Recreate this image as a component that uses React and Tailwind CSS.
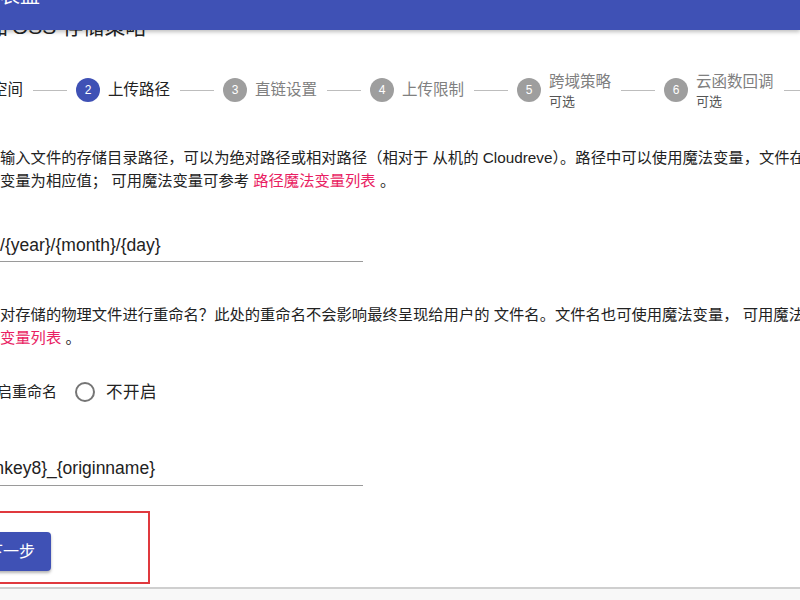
import React from 'react';

const font = { fontFamily: '"Liberation Sans", "Noto Sans CJK SC", sans-serif' };

const steps = [
  { n: 1, label: '存储空间', state: 'done' },
  { n: 2, label: '上传路径', state: 'active' },
  { n: 3, label: '直链设置' },
  { n: 4, label: '上传限制' },
  { n: 5, label: '跨域策略', optional: true },
  { n: 6, label: '云函数回调', optional: true },
  { n: 7, label: '完成' },
];

function Step({ step }) {
  const on = step.state === 'active' || step.state === 'done';
  return (
    <div className="w-[147px] shrink-0 flex items-center">
      <div
        className={`w-[24px] h-[24px] shrink-0 rounded-full flex items-center justify-center text-white text-[12px] ${
          on ? 'bg-[#3f51b5]' : 'bg-[#9e9e9e]'
        }`}
      >
        {step.n}
      </div>
      <div className="ml-[8px] shrink-0 flex flex-col">
        <span
          className={`text-[15.5px] leading-[22px] ${
            on ? 'text-[#222]' : 'text-[#808080]'
          }`}
        >
          {step.label}
        </span>
        {step.optional && (
          <span className="text-[13px] leading-[17px] text-[#555]">可选</span>
        )}
      </div>
      <div className="flex-1 ml-[10px] mr-[9px] border-t border-[#bdbdbd]" />
    </div>
  );
}

// text that runs off the left edge: right-aligned against a fixed end point
function CutLeft({ end, children, className = '' }) {
  return (
    <div className={`shrink-0 flex justify-end whitespace-nowrap ${className}`} style={{ width: end }}>
      <span>{children}</span>
    </div>
  );
}

export default function App() {
  return (
    <div className="relative w-[800px] h-[600px] overflow-hidden bg-white text-[#222]" style={font}>
      {/* app bar */}
      <div className="absolute top-0 left-0 right-0 h-[30px] z-10 bg-[#3f51b5] shadow-[0_2px_4px_rgba(0,0,0,0.25)] overflow-hidden">
        <div className="ml-[-20px] mt-[-14px] text-[20px] leading-[20px] text-white whitespace-nowrap">仪表盘</div>
      </div>

      <div className="flex flex-col">
        {/* title */}
        <div className="h-[54px] flex items-center text-[21px] whitespace-nowrap">
          <CutLeft end={8}>添加</CutLeft>
          <span className="ml-[4px]">OSS 存储策略</span>
        </div>

        {/* stepper */}
        <div className="h-[72px] flex items-center ml-[-71px]">
          {steps.map(s => (
            <Step key={s.n} step={s} />
          ))}
        </div>

        {/* path */}
        <p className="mt-[20px] w-[1100px] text-[15.3px] leading-[23px] whitespace-nowrap">
          输入文件的存储目录路径，可以为绝对路径或相对路径（相对于 从机的 Cloudreve）。路径中可以使用魔法变量，文件在上传时会自动替换这些
          <br />
          变量为相应值； 可用魔法变量可参考 <span className="text-[#e91e63]">路径魔法变量列表</span> 。
        </p>

        <div className="mt-[41px] w-[363px] pb-[4px] border-b border-[#9a9a9a] text-[17.5px] leading-[24px] whitespace-nowrap">
          /{'{year}'}/{'{month}'}/{'{day}'}
        </div>

        {/* file name */}
        <p className="mt-[41px] w-[1100px] text-[15.3px] leading-[23px] whitespace-nowrap">
          对存储的物理文件进行重命名？此处的重命名不会影响最终呈现给用户的 文件名。文件名也可使用魔法变量， 可用魔法变量可参考 <span className="text-[#e91e63]">文件名魔法</span>
          <br />
          <span className="text-[#e91e63]">变量列表</span> 。
        </p>

        <div className="mt-[23px] h-[40px] flex items-center whitespace-nowrap">
          <CutLeft end={57} className="text-[15px]">开启重命名</CutLeft>
          <span className="ml-[18px] w-[20px] h-[20px] shrink-0 rounded-full border-2 border-[#757575]" />
          <span className="ml-[11px] text-[16.5px] tracking-[0.5px]">不开启</span>
        </div>

        <div className="mt-[44px] w-[363px] pb-[5px] border-b border-[#9a9a9a] text-[17.5px] leading-[24px] flex">
          <CutLeft end={155}>{'{randomkey8}_{originname}'}</CutLeft>
        </div>

        {/* actions */}
        <div className="mt-[25px] ml-[-60px] w-[210px] h-[73px] border-2 border-[#e0393e] pl-[29px] pt-[19px]">
          <button className="h-[39px] w-[80px] rounded-[4px] bg-[#3f51b5] text-white text-[16px] shadow-[0_2px_3px_rgba(0,0,0,0.3)]">
            下一步
          </button>
        </div>

        <div className="mt-[3px] h-[20px] border-t-2 border-[#cfcfcf] bg-[#f8f8f8]" />
      </div>
    </div>
  );
}
